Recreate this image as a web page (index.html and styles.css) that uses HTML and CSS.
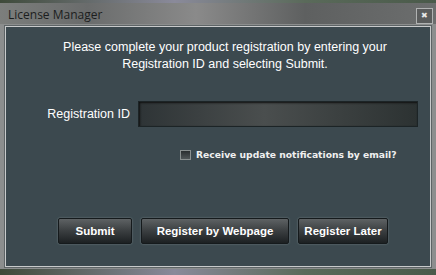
FILE: index.html
```html
<!DOCTYPE html>
<html lang="en">
<head>
    <meta charset="UTF-8">
    <title>License Manager</title>
    <link rel="stylesheet" href="styles.css">
</head>
<body>
    <div class="window">
        <!-- Title bar -->
        <div class="titlebar">
            <span class="title">License Manager</span>
            <span class="close">&#x2716;</span>
        </div>

        <div class="frame">
            <div class="panel">
                <p class="intro">Please complete your product registration by entering your<br>Registration ID and selecting Submit.</p>

                <div class="field">
                    <label for="regId">Registration ID</label>
                    <input id="regId" type="text">
                </div>

                <label class="notify">
                    <span class="box"></span>
                    Receive update notifications by email?
                </label>

                <div class="buttons">
                    <button class="btn btn-submit">Submit</button>
                    <button class="btn btn-web">Register by Webpage</button>
                    <button class="btn btn-later">Register Later</button>
                </div>
            </div>
        </div>
    </div>
</body>
</html>
```

FILE: styles.css
```css
body {
    margin: 0;
    width: 436px;
    height: 275px;
    overflow: hidden;
    background: linear-gradient(90deg, #3e4a3a, #8a8a9a 40%, #5a6a5a 70%, #4a5a4a);
    font-family: "Liberation Sans", Arial, sans-serif;
}
.window {
    margin-top: 3px;
    height: 266px;
    background: #7a7c7c;
    display: flex;
    flex-direction: column;
}
.titlebar {
    height: 21px;
    display: flex;
    align-items: center;
    justify-content: space-between;
    padding: 0 3px 0 8px;
    background: linear-gradient(90deg, #7c7e7c 0%, #6a6c6c 20%, #8a8a8a 45%, #5e6060 70%, #6c6e6e 100%);
}
.title {
    font-family: "Open Sans", "DejaVu Sans", sans-serif;
    font-size: 12px;
    color: #1c1e1e;
    margin-top: 2px;
}
.close {
    width: 15px;
    height: 14px;
    margin-top: 4px;
    border: 1px solid #b0b2b2;
    background: #5a5c5c;
    color: #e8e8e8;
    font-size: 8px;
    line-height: 14px;
    text-align: center;
}
.frame {
    flex: 1;
    padding: 2px 5px 2px 5px;
    background: #8c8e8e;
    display: flex;
}
.panel {
    flex: 1;
    border: 1px solid #c8cacb;
    outline: 1px solid #5e6466;
    background: #3c494f;
    color: #fff;
    display: flex;
    flex-direction: column;
}
.intro {
    margin: 12px 0 0;
    padding-left: 14px;
    text-align: center;
    font-size: 12.5px;
    line-height: 17px;
}
.field {
    display: flex;
    align-items: center;
    margin-top: 28px;
}
.field label {
    width: 124px;
    text-align: right;
    padding-right: 8px;
    font-size: 12.5px;
}
.field input {
    width: 278px;
    height: 24px;
    padding: 0;
    border: 1px solid #1c2426;
    background: linear-gradient(90deg, #2e3436, #4a4e4e 45%, #2c3232 100%);
    box-shadow: inset 1px 1px 2px #111;
}
.notify {
    display: flex;
    align-items: center;
    align-self: flex-start;
    margin: 22px 0 0 174px;
    font-family: "DejaVu Sans", Verdana, sans-serif;
    font-size: 9.2px;
    font-weight: bold;
    color: #f0f0f0;
}
.box {
    width: 9px;
    height: 8px;
    margin-right: 5px;
    border: 1px solid #8a9090;
    background: linear-gradient(#2a2e30, #505658);
}
.buttons {
    display: flex;
    justify-content: center;
    gap: 9px;
    margin-top: 58px;
    padding-left: 10px;
}
.btn {
    height: 26px;
    padding: 0;
    border: 1px solid #151a1c;
    border-radius: 2px;
    background: linear-gradient(#5e6264, #3a3e40 50%, #1c2022);
    box-shadow: 0 0 2px #7a8688;
    color: #fff;
    font-family: "Liberation Sans", Arial, sans-serif;
    font-size: 11.5px;
    font-weight: bold;
    cursor: pointer;
}
.btn-submit {
    width: 74px;
}
.btn-web {
    width: 148px;
}
.btn-later {
    width: 90px;
}
```
